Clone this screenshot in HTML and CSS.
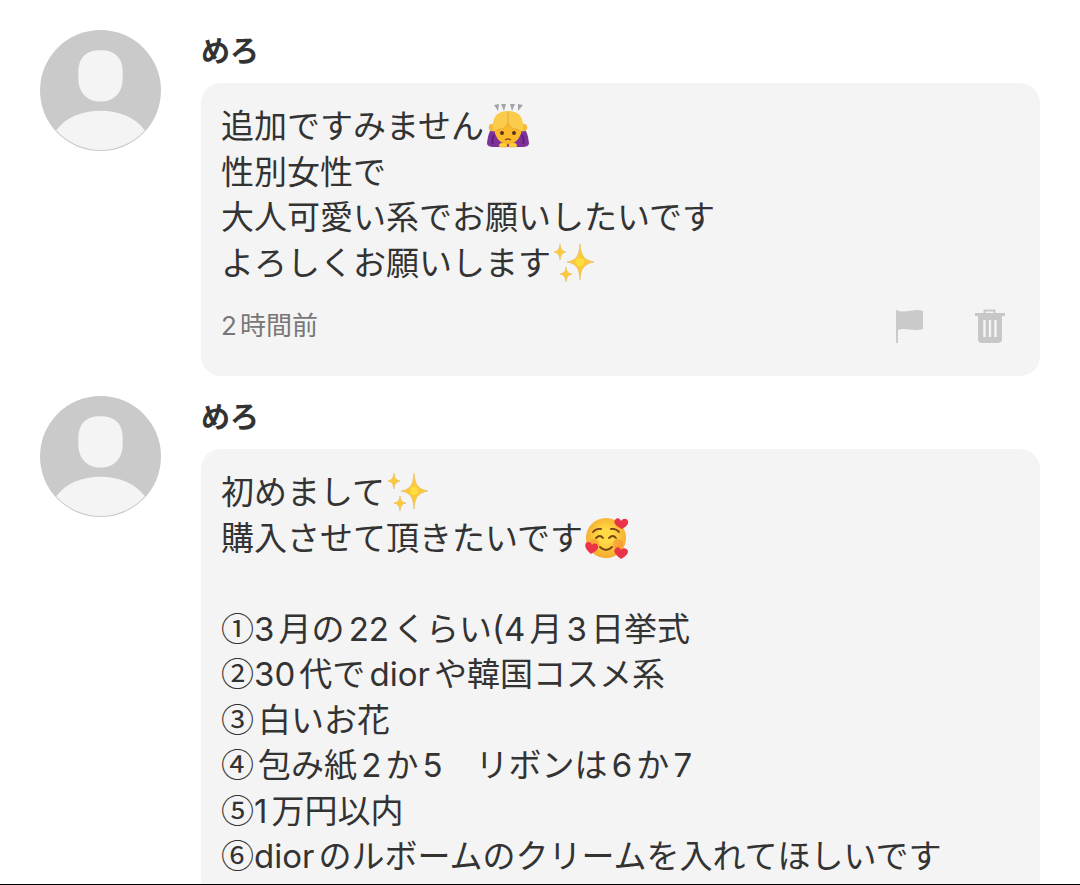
FILE: index.html
```
<!DOCTYPE html>
<html lang="ja">

<head>
    <meta charset="UTF-8">
    <meta name="viewport" content="width=device-width, initial-scale=1">
    <link rel="stylesheet" href="styles.css">
    <title>コメント</title>
</head>

<body>
    <svg class="symbols" aria-hidden="true">
        <symbol id="user" viewBox="0 0 120 120">
            <circle cx="60" cy="60" r="60" fill="#cacaca" />
            <path d="M60 20c15 0 22 8 22 22v6c0 14-9 23-22 23s-22-9-22-23v-6c0-14 7-22 22-22z" fill="#f4f4f4" />
            <path d="M16 99.500C26 86 42 80 60 80s34 6 44 19.500A59.500 59.500 0 0 1 16 99.500z" fill="#f4f4f4" />
        </symbol>
        <symbol id="sparkles" viewBox="0 0 44 44">
            <g fill="#fbc93a" stroke="#e6b95a" stroke-width=".6">
                <path d="M27 3c1 12 4 16 14 18-10 2-13 6-14 18-1-12-3-16-13-18 10-2 12-6 13-18z" />
                <path d="M7 3c.6 5 2 7 6 8-4 1-5.400 3-6 8-.6-5-2-7-6-8 4-1 5.400-3 6-8z" />
                <path d="M13 26c.6 5 2 6 6 7-4 1-5.400 3-6 8-.6-5-2-7-6-8 4-1 5.400-2 6-7z" />
            </g>
            <circle cx="27" cy="21" r="4" fill="#ffdf3f" />
        </symbol>
    </svg>

    <div class="comments">
        <article class="comment">
            <svg class="avatar" role="img" aria-label="めろ"><use href="#user" /></svg>
            <div class="comment-main">
                <h2 class="name">めろ</h2>
                <div class="bubble">
                    <p class="message">追加ですみません<svg class="emoji" viewBox="0 0 44 44" role="img" aria-label="お辞儀">
                        <path d="M8 1l5-1-1 7zM15 0h5l-2 7zM24 0h5l-3 7zM32 0l5 1-5 6z" fill="#a2a5a8" />
                        <path d="M9 24C3 25 2 32 1 39c0 3 3 4 7 4h28c4 0 7-1 7-4-1-7-2-14-8-15z" fill="#7d3299" />
                        <path d="M8 31c-2 3-2 6-1 9M36 31c2 3 2 6 1 9" fill="none" stroke="#5e207c" stroke-width="2" />
                        <path d="M8 20c-4-1-6 2-5 5 1 2 4 3 6 2zM36 20c4-1 6 2 5 5-1 2-4 3-6 2z" fill="#f5b93a" />
                        <path d="M8 22c0-9 6-12 14-12s14 3 14 12c0 11-6 18-14 18S8 33 8 22z" fill="#fdb92c" />
                        <path d="M22 7C11 7 6 13 7 25c0 2 2 3 3 1 7-1 11-3 12-7 1 4 5 6 12 7 1 2 3 1 3-1 1-12-4-18-15-18z" fill="#fbcb4b" />
                        <path d="M22 8v11c-1 4-5 6-11 7M22 19c1 4 5 6 11 7" fill="none" stroke="#dea035" stroke-width=".8" />
                        <circle cx="16" cy="29" r="2" fill="#54351a" />
                        <circle cx="28" cy="29" r="2" fill="#54351a" />
                        <path d="M19 36q3-2 6 0" fill="none" stroke="#8b541c" stroke-width="1.500" />
                        <path d="M13 42c0-3 3-4 8-3v4h-7zM31 42c0-3-3-4-8-3v4h7z" fill="#ffcf39" stroke="#dc992a" stroke-width=".5" />
                    </svg><br>
                    性別女性で<br>
                    大人可愛い系でお願いしたいです<br>
                    よろしくお願いします<svg class="emoji" role="img" aria-label="キラキラ"><use href="#sparkles" /></svg></p>
                    <div class="comment-footer">
                        <time class="time">2時間前</time>
                        <div class="actions">
                            <button class="icon-button" type="button" aria-label="報告する">
                                <svg viewBox="0 0 36 36"><path d="M4 2v33h2V22c8-3 15 2 25-1V3C23 0 16 5 6 3V2z" fill="#cacaca" /></svg>
                            </button>
                            <button class="icon-button" type="button" aria-label="削除する">
                                <svg viewBox="0 0 36 36">
                                    <path d="M12.500 6V2.500h10V6" fill="none" stroke="#c7c7c7" stroke-width="2" />
                                    <path d="M3 5h30v3h-3v23q0 4-4 4H10q-4 0-4-4V8H3z" fill="#c7c7c7" />
                                    <path d="M12.500 12v17M18 12v17M23.500 12v17" stroke="#f4f4f4" stroke-width="2.400" />
                                </svg>
                            </button>
                        </div>
                    </div>
                </div>
            </div>
        </article>

        <article class="comment">
            <svg class="avatar" role="img" aria-label="めろ"><use href="#user" /></svg>
            <div class="comment-main">
                <h2 class="name">めろ</h2>
                <div class="bubble">
                    <p class="message">初めまして<svg class="emoji" role="img" aria-label="キラキラ"><use href="#sparkles" /></svg><br>
                    購入させて頂きたいです<svg class="emoji" viewBox="0 0 44 44" role="img" aria-label="ハートの笑顔">
                        <defs>
                            <radialGradient id="face" cx=".5" cy=".45" r=".55">
                                <stop offset=".3" stop-color="#ffda45" />
                                <stop offset="1" stop-color="#f5a92c" />
                            </radialGradient>
                        </defs>
                        <circle cx="21" cy="22" r="20" fill="url(#face)" />
                        <circle cx="9" cy="28" r="5" fill="#f47b32" opacity=".4" />
                        <circle cx="33" cy="28" r="5" fill="#f47b32" opacity=".4" />
                        <path d="M8 16q3-4 8-3M26 13q5-1 8 3M11 22q4-4 7 0M24 22q4-4 7 0M15 31q6 6 12 0" fill="none" stroke="#75421a" stroke-width="1.800" stroke-linecap="round" />
                        <g fill="#ea3348">
                            <path d="M37 13c-6-3-9-6-7-9 2-3 5-2 6 1 2-3 6-3 7 0 1 4-3 6-6 8z" />
                            <path d="M6 38c-5-4-7-8-5-11 2-2 5-1 6 2 2-2 5-2 6 1 1 4-4 6-7 8z" />
                            <path d="M36 43c-5-4-8-7-6-10 2-3 5-2 6 1 2-3 6-2 7 1 0 4-4 6-7 8z" />
                        </g>
                    </svg><br>
                    <br>
                    <span class="number">①</span>3月の22くらい(4月3日挙式<br>
                    <span class="number">②</span>30代でdiorや韓国コスメ系<br>
                    <span class="number spaced">③</span>白いお花<br>
                    <span class="number spaced">④</span>包み紙2か5　リボンは6か7<br>
                    <span class="number">⑤</span>1万円以内<br>
                    <span class="number">⑥</span>diorのルボームのクリームを入れてほしいです</p>
                </div>
            </div>
        </article>
    </div>
</body>

</html>
```
FILE: styles.css
```
* {
    box-sizing: border-box;
}

body {
    margin: 0;
    height: 100vh;
    overflow: hidden;
    background: #fff;
    border-bottom: 1px solid #000;
    color: #333;
    font-family: Inter, "Noto Sans CJK JP", sans-serif;
}

.symbols {
    display: none;
}

.comments {
    height: 100%;
    overflow: hidden;
    padding: 30px 40px 0;
}

.comment {
    display: flex;
    gap: 40px;
    margin-bottom: 20px;
}

.avatar {
    flex: none;
    width: 121px;
    height: 121px;
}

.comment-main {
    flex: 1;
    min-width: 0;
}

.name {
    margin: 0 0 9px;
    font-size: 29px;
    line-height: 44px;
    font-weight: 700;
}

.bubble {
    padding: 21px 20px 32px;
    background: #f4f4f4;
    border-radius: 20px;
}

.message {
    margin: 0;
    font-size: 33px;
    line-height: 1.38;
    text-autospace: normal;
}

.number {
    font-family: "Noto Sans CJK JP", sans-serif;
    line-height: 1;
}

.spaced {
    margin-right: 4px;
}

.emoji {
    width: 44px;
    height: 44px;
    margin: -4px 2px;
    vertical-align: -6px;
}

.comment-footer {
    display: flex;
    align-items: center;
    justify-content: space-between;
    margin-top: 22px;
    padding-right: 12px;
}

.time {
    color: #777;
    font-size: 26px;
    line-height: 36px;
    text-autospace: normal;
}

.actions {
    display: flex;
    gap: 44px;
}

.icon-button {
    padding: 0;
    border: 0;
    background: none;
    cursor: pointer;
}

.icon-button svg {
    display: block;
    width: 36px;
    height: 36px;
}
```
